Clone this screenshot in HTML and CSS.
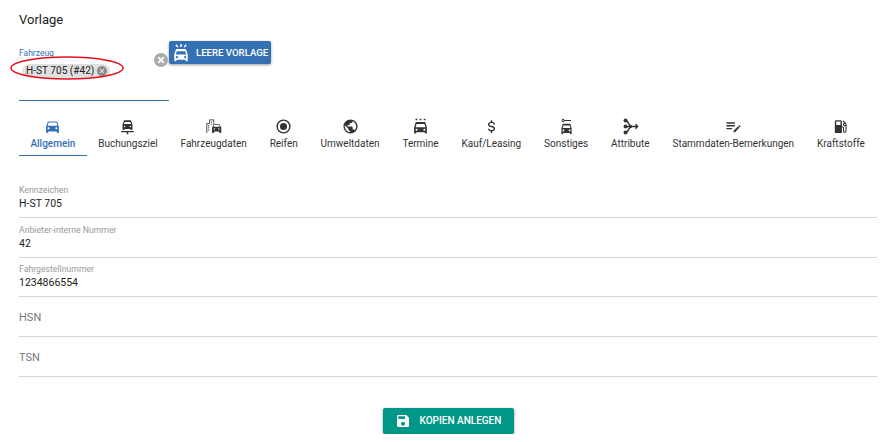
FILE: index.html
```html
<!DOCTYPE html>
<html lang="de">
<head>
    <meta charset="UTF-8">
    <meta name="viewport" content="width=device-width, initial-scale=1.0">
    <title>Vorlage</title>
    <link rel="stylesheet" href="styles.css">
</head>
<body>
    <svg class="icon-defs" aria-hidden="true">
        <symbol id="i-car" viewBox="0 0 24 24"><path d="M5,11L6.5,6.5H17.5L19,11M17.5,16A1.5,1.5 0 0,1 16,14.5A1.5,1.5 0 0,1 17.5,13A1.5,1.5 0 0,1 19,14.5A1.5,1.5 0 0,1 17.5,16M6.5,16A1.5,1.5 0 0,1 5,14.5A1.5,1.5 0 0,1 6.5,13A1.5,1.5 0 0,1 8,14.5A1.5,1.5 0 0,1 6.5,16M18.92,6C18.72,5.42 18.16,5 17.5,5H6.5C5.84,5 5.28,5.42 5.08,6L3,12V20A1,1 0 0,0 4,21H5A1,1 0 0,0 6,20V19H18V20A1,1 0 0,0 19,21H20A1,1 0 0,0 21,20V12L18.92,6Z"/></symbol>
        <symbol id="i-car-pin" viewBox="0 0 24 24"><path d="M7,8.5L8,5.5H16L17,8.5H7M16,13A1,1 0 1,1 16,11A1,1 0 0,1 16,13M8,13A1,1 0 1,1 8,11A1,1 0 0,1 8,13M17.3,4.2C17.1,3.5 16.6,3 16,3H8C7.4,3 6.9,3.5 6.7,4.2L5,9V16A1,1 0 0,0 6,17H7A1,1 0 0,0 8,16V15.5H16V16A1,1 0 0,0 17,17H18A1,1 0 0,0 19,16V9L17.3,4.2Z"/><path d="M3,18.5H21V20H13V23H11V20H3Z"/></symbol>
        <symbol id="i-car-city" viewBox="0 0 24 24"><path d="M2,21V7H6V2H13V9H11.8V3.2H7.2V8.2H3.2V21ZM4.5,10H6V11.5H4.5ZM4.5,13H6V14.5H4.5ZM4.5,16H6V17.5H4.5ZM8.5,5H10V6.5H8.5ZM8.5,8H10V9.5H8.5Z"/><path d="M12,12.5L13,10H20L21,12.5ZM19.7,16.5A1,1 0 1,1 19.7,14.5A1,1 0 0,1 19.7,16.5M13.3,16.5A1,1 0 1,1 13.3,14.5A1,1 0 0,1 13.3,16.5M21,9.8C20.8,9.2 20.4,8.8 20,8.8H13C12.6,8.8 12.2,9.2 12,9.8L10,13.5V20A1,1 0 0,0 11,21H12A1,1 0 0,0 13,20V19H20V20A1,1 0 0,0 21,21H22A1,1 0 0,0 23,20V13.5Z"/></symbol>
        <symbol id="i-radio" viewBox="0 0 24 24"><path d="M12,20A8,8 0 0,1 4,12A8,8 0 0,1 12,4A8,8 0 0,1 20,12A8,8 0 0,1 12,20M12,2A10,10 0 0,0 2,12A10,10 0 0,0 12,22A10,10 0 0,0 22,12A10,10 0 0,0 12,2M12,7A5,5 0 0,0 7,12A5,5 0 0,0 12,17A5,5 0 0,0 17,12A5,5 0 0,0 12,7Z"/></symbol>
        <symbol id="i-earth" viewBox="0 0 24 24"><path d="M17.9,17.39C17.64,16.59 16.89,16 16,16H15V13A1,1 0 0,0 14,12H8V10H10A1,1 0 0,0 11,9V7H13A2,2 0 0,0 15,5V4.59C17.93,5.77 20,8.64 20,12C20,14.08 19.2,15.97 17.9,17.39M11,19.93C7.05,19.44 4,16.08 4,12C4,11.38 4.08,10.78 4.21,10.21L9,15V16A2,2 0 0,0 11,18M12,2A10,10 0 0,0 2,12A10,10 0 0,0 12,22A10,10 0 0,0 22,12A10,10 0 0,0 12,2Z"/></symbol>
        <symbol id="i-car-dots" viewBox="0 0 24 24"><path d="M5,1H7.5V3H5ZM10.75,1H13.25V3H10.75ZM16.5,1H19V3H16.5Z"/><path d="M5,13L6.5,8.5H17.5L19,13M17.5,18A1.5,1.5 0 1,1 17.5,15A1.5,1.5 0 0,1 17.5,18M6.5,18A1.5,1.5 0 1,1 6.5,15A1.5,1.5 0 0,1 6.5,18M18.92,6.5C18.72,5.9 18.16,5.5 17.5,5.5H6.5C5.84,5.5 5.28,5.9 5.08,6.5L3,13V21A1,1 0 0,0 4,22H5A1,1 0 0,0 6,21V20H18V21A1,1 0 0,0 19,22H20A1,1 0 0,0 21,21V13Z"/></symbol>
        <symbol id="i-usd" viewBox="0 0 24 24"><path d="M7,15H9C9,16.08 10.37,17 12,17C13.63,17 15,16.08 15,15C15,13.9 13.96,13.5 11.76,12.97C9.64,12.44 7,11.78 7,9C7,7.21 8.47,5.69 11,5.18V3H13V5.18C15.53,5.69 17,7.21 17,9H15C15,7.92 13.63,7 12,7C10.37,7 9,7.92 9,9C9,10.1 10.04,10.5 12.24,11.03C14.36,11.56 17,12.22 17,15C17,16.79 15.53,18.31 13,18.82V21H11V18.82C8.47,18.31 7,16.79 7,15Z"/></symbol>
        <symbol id="i-car-key" viewBox="0 0 24 24"><g transform="translate(2.4 0) scale(.8 1)"><path d="M6,1A2.5,2.5 0 1,1 6,6A2.5,2.5 0 0,1 6,1M6,2.5A1,1 0 1,0 6,4.5A1,1 0 0,0 6,2.5M8,2.7H20V4.3H8Z"/><path d="M5,14L6.5,10.5H17.5L19,14M17.5,19A1.5,1.5 0 1,1 17.5,16A1.5,1.5 0 0,1 17.5,19M6.5,19A1.5,1.5 0 1,1 6.5,16A1.5,1.5 0 0,1 6.5,19M18.92,8.8C18.72,8.3 18.16,8 17.5,8H6.5C5.84,8 5.28,8.3 5.08,8.8L3,14V22A1,1 0 0,0 4,23H5A1,1 0 0,0 6,22V21H18V22A1,1 0 0,0 19,23H20A1,1 0 0,0 21,22V14Z"/></g></symbol>
        <symbol id="i-branch" viewBox="0 0 24 24"><circle cx="5" cy="3.5" r="2.8"/><circle cx="5" cy="12" r="2.8"/><circle cx="5" cy="20.5" r="2.8"/><path d="M5,3.5C9,3.5 9,11 13,11.2V12.8C9,13 9,20.5 5,20.5" fill="none" stroke="currentColor" stroke-width="2.2"/><path d="M5,11H19V7.5L23.5,12L19,16.5V13H5Z"/></symbol>
        <symbol id="i-note" viewBox="0 0 24 24"><path d="M2,6V8H14V6H2M2,10V12H14V10H2M20.04,10.13C19.9,10.13 19.76,10.19 19.65,10.3L18.65,11.3L20.7,13.35L21.7,12.35C21.92,12.14 21.92,11.79 21.7,11.58L20.42,10.3C20.31,10.19 20.18,10.13 20.04,10.13M18.07,11.88L12,17.94V20H14.06L20.12,13.93L18.07,11.88M2,14V16H10V14H2Z"/></symbol>
        <symbol id="i-gas" viewBox="0 0 24 24"><path d="M18,10A1,1 0 0,1 17,9A1,1 0 0,1 18,8A1,1 0 0,1 19,9A1,1 0 0,1 18,10M12,10H6V5H12M19.77,7.23L19.78,7.22L16.06,3.5L15,4.56L17.11,6.67C16.17,7 15.5,7.93 15.5,9A2.5,2.5 0 0,0 18,11.5C18.36,11.5 18.69,11.42 19,11.29V18.5A1,1 0 0,1 18,19.5A1,1 0 0,1 17,18.5V14C17,12.89 16.1,12 15,12H14V5C14,3.89 13.1,3 12,3H6C4.89,3 4,3.89 4,5V21H14V13.5H15.5V18.5A2.5,2.5 0 0,0 18,21A2.5,2.5 0 0,0 20.5,18.5V9C20.5,8.31 20.22,7.68 19.77,7.23Z"/></symbol>
        <symbol id="i-close" viewBox="0 0 24 24"><path d="M12,2C17.53,2 22,6.47 22,12C22,17.53 17.53,22 12,22C6.47,22 2,17.53 2,12C2,6.47 6.47,2 12,2M15.59,7L12,10.59L8.41,7L7,8.41L10.59,12L7,15.59L8.41,17L12,13.41L15.59,17L17,15.59L13.41,12L17,8.41L15.59,7Z"/></symbol>
        <symbol id="i-car-light" viewBox="0 0 24 24"><path d="M11,0H13V4H11ZM4.5,1.5L6,0.2L8.5,3.5L7,4.8ZM19.5,1.5L18,0.2L15.5,3.5L17,4.8Z"/><path d="M5,14L6.5,9.5H17.5L19,14M17.5,19A1.5,1.5 0 1,1 17.5,16A1.5,1.5 0 0,1 17.5,19M6.5,19A1.5,1.5 0 1,1 6.5,16A1.5,1.5 0 0,1 6.5,19M18.92,7.5C18.72,6.9 18.16,6.5 17.5,6.5H6.5C5.84,6.5 5.28,6.9 5.08,7.5L3,14V22A1,1 0 0,0 4,23H5A1,1 0 0,0 6,22V21H18V22A1,1 0 0,0 19,23H20A1,1 0 0,0 21,22V14Z"/></symbol>
        <symbol id="i-save" viewBox="0 0 24 24"><path d="M15,9H5V5H15M12,19A3,3 0 0,1 9,16A3,3 0 0,1 12,13A3,3 0 0,1 15,16A3,3 0 0,1 12,19M17,3H5C3.89,3 3,3.9 3,5V19A2,2 0 0,0 5,21H19A2,2 0 0,0 21,19V7L17,3Z"/></symbol>
    </svg>

    <div class="page">
        <h1 class="title">Vorlage</h1>

        <div class="template-row">
            <div class="vehicle-select">
                <label class="select-label">Fahrzeug</label>
                <span class="chip">H-ST 705 (#42)<svg class="chip-close"><use href="#i-close"/></svg></span>
                <svg class="clear-btn" viewBox="0 0 14 14"><circle cx="7" cy="7" r="7"/><path d="M4.2,4.2L9.8,9.8M9.8,4.2L4.2,9.8"/></svg>
                <svg class="marker" viewBox="0 0 116 26"><ellipse cx="58" cy="13" rx="56" ry="11"/></svg>
            </div>
            <button class="btn btn-blue"><svg class="btn-icon"><use href="#i-car-light"/></svg>Leere Vorlage</button>
        </div>

        <nav class="tabs">
            <a class="tab active"><svg><use href="#i-car"/></svg>Allgemein</a>
            <a class="tab"><svg><use href="#i-car-pin"/></svg>Buchungsziel</a>
            <a class="tab"><svg><use href="#i-car-city"/></svg>Fahrzeugdaten</a>
            <a class="tab"><svg><use href="#i-radio"/></svg>Reifen</a>
            <a class="tab"><svg><use href="#i-earth"/></svg>Umweltdaten</a>
            <a class="tab"><svg><use href="#i-car-dots"/></svg>Termine</a>
            <a class="tab"><svg><use href="#i-usd"/></svg>Kauf/Leasing</a>
            <a class="tab"><svg><use href="#i-car-key"/></svg>Sonstiges</a>
            <a class="tab"><svg><use href="#i-branch"/></svg>Attribute</a>
            <a class="tab"><svg><use href="#i-note"/></svg>Stammdaten-Bemerkungen</a>
            <a class="tab"><svg><use href="#i-gas"/></svg>Kraftstoffe</a>
        </nav>

        <div class="fields">
            <div class="field"><span class="field-label">Kennzeichen</span><span class="field-value">H-ST 705</span></div>
            <div class="field"><span class="field-label">Anbieter-interne Nummer</span><span class="field-value">42</span></div>
            <div class="field"><span class="field-label">Fahrgestellnummer</span><span class="field-value">1234866554</span></div>
            <div class="field empty"><span class="field-placeholder">HSN</span></div>
            <div class="field empty"><span class="field-placeholder">TSN</span></div>
        </div>

        <div class="actions">
            <button class="btn btn-green"><svg class="btn-icon"><use href="#i-save"/></svg>Kopien anlegen</button>
        </div>
    </div>
</body>
</html>
```

FILE: styles.css
```css
* {
    box-sizing: border-box;
}

body {
    margin: 0;
    background: #fff;
    color: #212121;
    font-family: Roboto, "Liberation Sans", sans-serif;
}

.icon-defs {
    display: none;
}

.page {
    padding: 13px 19px 0;
}

.title {
    margin: 0;
    font-size: 13px;
    line-height: 14px;
    font-weight: 400;
}

/* Fahrzeug-Auswahl */
.template-row {
    display: flex;
    align-items: flex-start;
    margin-top: 14px;
}

.vehicle-select {
    position: relative;
    width: 150px;
    height: 53px;
    margin-top: 7px;
    border-bottom: 1px solid #3570b5;
}

.select-label {
    display: block;
    color: #3570b5;
    font-size: 8.5px;
    line-height: 11px;
}

.chip {
    display: inline-flex;
    align-items: center;
    gap: 2px;
    height: 14px;
    margin: 1px 0 0 3px;
    padding: 0 2px 0 4px;
    border-radius: 7px;
    background: #e0e0e0;
    font-size: 10.1px;
}

.chip-close {
    width: 12px;
    height: 12px;
    fill: #8a8a8a;
}

.clear-btn {
    position: absolute;
    top: 5px;
    left: 135px;
    width: 14px;
    height: 14px;
    fill: #aaa;
    stroke: #fff;
    stroke-width: 1.8;
}

.clear-btn circle {
    stroke: none;
}

.marker {
    position: absolute;
    top: 7px;
    left: -10px;
    width: 116px;
    height: 26px;
    fill: none;
    stroke: #e2101c;
    stroke-width: 1.5;
}

/* Buttons */
.btn {
    display: inline-flex;
    align-items: center;
    border: none;
    border-radius: 2px;
    color: #fff;
    font-family: inherit;
    font-weight: 500;
    text-transform: uppercase;
    box-shadow: 0 1px 3px rgba(0,0,0,0.4);
}

.btn-icon {
    fill: #fff;
}

.btn-blue {
    height: 23px;
    width: 102px;
    padding: 0 0 0 3px;
    background: #3570b5;
    font-size: 9.6px;
}

.btn-blue .btn-icon {
    width: 18px;
    height: 18px;
    margin-right: 6px;
}

.btn-green {
    height: 26px;
    width: 131px;
    padding: 0 0 0 12px;
    background: #009688;
    font-size: 10px;
}

.btn-green .btn-icon {
    width: 16px;
    height: 16px;
    margin-right: 9px;
}

/* Tabs */
.tabs {
    display: flex;
    margin-top: 16px;
}

.tab {
    display: flex;
    flex-direction: column;
    align-items: center;
    height: 39px;
    padding: 1px 11.45px 0;
    color: #333;
    font-size: 10px;
    line-height: 14px;
    white-space: nowrap;
}

.tab svg {
    width: 17px;
    height: 17px;
    margin-bottom: 2px;
    fill: #333;
}

.tab.active {
    color: #3570b5;
    font-weight: 500;
    border-bottom: 1px solid #3570b5;
}

.tab.active svg {
    fill: #3570b5;
}

/* Felder */
.fields {
    margin-top: 22px;
}

.field {
    display: flex;
    flex-direction: column;
    justify-content: flex-end;
    height: 39.8px;
    padding-bottom: 7px;
    border-bottom: 1px solid #d5d5d5;
}

.field-label {
    margin-bottom: 1px;
    color: #999;
    font-size: 8.7px;
    line-height: 12px;
}

.field-value {
    color: #212121;
    font-size: 10.5px;
    line-height: 13px;
}

.field.empty {
    justify-content: center;
    padding: 2px 0 0;
}

.field-placeholder {
    color: #777;
    font-size: 11px;
}

.actions {
    display: flex;
    justify-content: center;
    margin-top: 31px;
}
```
